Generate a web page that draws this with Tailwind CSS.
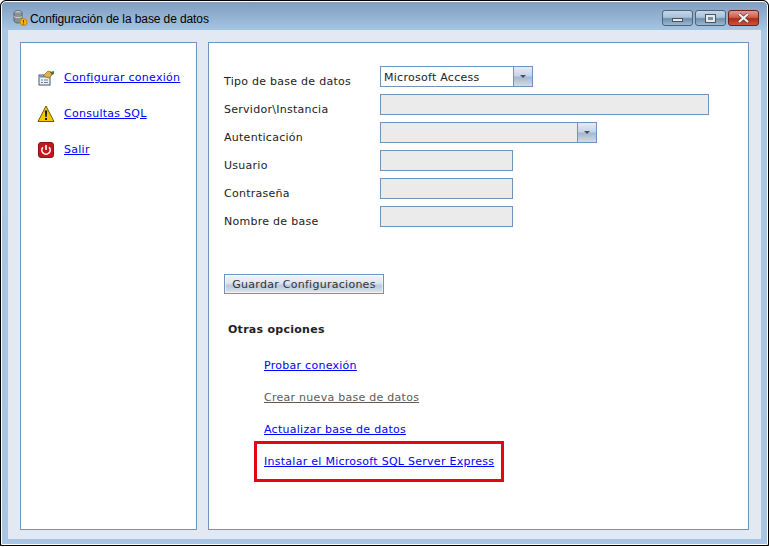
<!DOCTYPE html>
<html lang="es">
<head>
    <meta charset="UTF-8">
    <title>Configuración de la base de datos</title>
    <script src="https://cdn.jsdelivr.net/npm/@tailwindcss/browser@4"></script>
</head>
<body class="bg-white overflow-hidden font-['DejaVu_Sans',sans-serif] text-[11px] tracking-[0.27px] text-[#222]">
    <div class="w-[769px] h-[547px] pb-px">
        <div class="h-[546px] border border-black rounded-t-[6px] bg-black">
            <div class="h-full border border-white rounded-t-[5px] bg-[linear-gradient(180deg,#7f9ec0_0px,#a9c8e6_30px,#a8c5e3_100%)] flex flex-col px-[6px] pb-[5px]">

                <!-- title bar -->
                <div class="h-[28px] shrink-0 flex items-start">
                    <svg class="w-[18px] h-[18px] mt-[7px] ml-[3px]" viewBox="0 0 18 18">
                        <ellipse cx="7" cy="3.500" rx="4" ry="2" fill="#c9ccd0" stroke="#6d7278"/>
                        <path d="M3 3.500v8c0 1.500 1.800 2.500 4 2.500s4-1 4-2.500v-8" fill="#8b9096" stroke="#5e6368"/>
                        <path d="M3 7.500c1 1.500 7 1.500 8 0" fill="none" stroke="#d0d3d6"/>
                        <circle cx="12.500" cy="13" r="3.500" fill="#f2b01e" stroke="#c9860f"/>
                        <path d="M12.500 11v2.500M12.500 14.500v1" stroke="#5a3a00"/>
                    </svg>
                    <span class="ml-px mt-[7px] text-[12px] leading-[20px] text-black font-['Liberation_Sans',sans-serif] tracking-[-0.1px]">Configuración de la base de datos</span>

                    <div class="ml-auto mt-[8px] mr-[2px] flex gap-[2px]">
                        <div class="w-[31px] h-[16px] rounded-[3px] border border-[#4d6378] bg-[linear-gradient(180deg,#c4d6e8_0%,#a9c1d9_45%,#6f8fae_55%,#9db8d2_100%)] flex items-center justify-center">
                            <div class="w-[11px] h-[4px] mt-[3px] bg-[#e8e8e8] border border-[#4a5560]"></div>
                        </div>
                        <div class="w-[31px] h-[16px] rounded-[3px] border border-[#4d6378] bg-[linear-gradient(180deg,#c4d6e8_0%,#a9c1d9_45%,#6f8fae_55%,#9db8d2_100%)] flex items-center justify-center">
                            <div class="w-[11px] h-[9px] bg-[#e8e8e8] border border-[#4a5560] flex items-center justify-center"><div class="w-[5px] h-[3px] bg-[#6f8fae]"></div></div>
                        </div>
                        <div class="w-[31px] h-[16px] rounded-[3px] border border-[#6b2018] bg-[linear-gradient(180deg,#e29a8c_0%,#d0604f_45%,#ae2a1a_55%,#c8553f_100%)] flex items-center justify-center">
                            <svg class="w-[13px] h-[10px]" viewBox="0 0 13 10">
                                <path d="M2 1l9 8M11 1l-9 8" stroke="#5b3a36" stroke-width="3.500"/>
                                <path d="M2 1l9 8M11 1l-9 8" stroke="#f2f2f2" stroke-width="2.200"/>
                            </svg>
                        </div>
                    </div>
                </div>

                <!-- content -->
                <div class="flex-1 bg-[#e3e9f2] flex gap-[11px] pl-[12px] pr-[12px] pt-[12px] pb-[9px]">

                    <!-- left menu -->
                    <div class="w-[177px] border border-[#7093bb] bg-white pt-[25px] pl-[17px]">
                        <div class="flex items-center h-[20px] mb-[16px]">
                            <svg class="w-[17px] h-[16px]" viewBox="0 0 17 16">
                                <rect x="1" y="5" width="11" height="10" fill="#eef2f8" stroke="#44566e"/>
                                <rect x="1.500" y="5.500" width="10" height="2" fill="#6f8fb8"/>
                                <path d="M3 10h2M6 10h4M3 12.500h2M6 12.500h4" stroke="#6b7f99"/>
                                <path d="M5 6l5-5 3 1 1 3-3 3-3-1z" fill="#e0b050" stroke="#8a6414" stroke-width=".7"/>
                                <path d="M12 2l4-1v3l-2 1z" fill="#3f7d3a"/>
                            </svg>
                            <a href="#" class="ml-[9px] text-[#0000ff] underline">Configurar conexión</a>
                        </div>
                        <div class="flex items-center h-[20px] mb-[16px]">
                            <svg class="w-[18px] h-[18px] -ml-px" viewBox="0 0 18 18">
                                <path d="M9 1L17 16.500H1z" fill="#f5c800" stroke="#6d5a10" stroke-linejoin="round"/>
                                <path d="M7.800 5.500h2.400l-.5 6.500h-1.400z" fill="#1b1b1b"/>
                                <rect x="8" y="13" width="2" height="2" fill="#1b1b1b"/>
                            </svg>
                            <a href="#" class="ml-[9px] text-[#0000ff] underline">Consultas SQL</a>
                        </div>
                        <div class="flex items-center h-[20px]">
                            <svg class="w-[16px] h-[16px]" viewBox="0 0 16 16">
                                <rect x=".5" y=".5" width="15" height="15" rx="2.500" fill="#c4161c" stroke="#8f1015"/>
                                <path d="M4.900 5.200a4.200 4.200 0 1 0 6.200 0" fill="none" stroke="#fff" stroke-width="1.600"/>
                                <path d="M8 3v5" stroke="#fff" stroke-width="1.600"/>
                            </svg>
                            <a href="#" class="ml-[10px] text-[#0000ff] underline">Salir</a>
                        </div>
                    </div>

                    <!-- right panel -->
                    <div class="flex-1 border border-[#7093bb] bg-white pt-[23px] pl-[15px]">
                        <div class="flex flex-col gap-[7px]">
                            <div class="flex h-[21px]">
                                <label class="w-[156px] pt-[5px] leading-[22px]">Tipo de base de datos</label>
                                <div class="w-[153px] h-[21px] border border-[#7093bb] flex">
                                    <span class="flex-1 pl-[3px] leading-[21px]">Microsoft Access</span>
                                    <span class="w-[19px] border-l border-[#7093bb] bg-[linear-gradient(180deg,#e4ebf3_0%,#c7d5e5_45%,#a5b9d0_55%,#d0dcea_100%)] flex items-center justify-center"><span class="w-0 h-0 border-x-[3px] border-t-[3px] border-x-transparent border-t-[#44505e]"></span></span>
                                </div>
                            </div>
                            <div class="flex h-[21px]">
                                <label class="w-[156px] pt-[5px] leading-[22px]">Servidor\Instancia</label>
                                <div class="w-[329px] h-[21px] border border-[#7093bb] bg-[#ebebeb]"></div>
                            </div>
                            <div class="flex h-[21px]">
                                <label class="w-[156px] pt-[5px] leading-[22px]">Autenticación</label>
                                <div class="w-[217px] h-[21px] border border-[#7093bb] bg-[#ebebeb] flex">
                                    <span class="flex-1"></span>
                                    <span class="w-[19px] border-l border-[#7093bb] bg-[linear-gradient(180deg,#e4ebf3_0%,#c7d5e5_45%,#a5b9d0_55%,#d0dcea_100%)] flex items-center justify-center"><span class="w-0 h-0 border-x-[3px] border-t-[3px] border-x-transparent border-t-[#44505e]"></span></span>
                                </div>
                            </div>
                            <div class="flex h-[21px]">
                                <label class="w-[156px] pt-[5px] leading-[22px]">Usuario</label>
                                <div class="w-[133px] h-[21px] border border-[#7093bb] bg-[#ebebeb]"></div>
                            </div>
                            <div class="flex h-[21px]">
                                <label class="w-[156px] pt-[5px] leading-[22px]">Contraseña</label>
                                <div class="w-[133px] h-[21px] border border-[#7093bb] bg-[#ebebeb]"></div>
                            </div>
                            <div class="flex h-[21px]">
                                <label class="w-[156px] pt-[5px] leading-[22px]">Nombre de base</label>
                                <div class="w-[133px] h-[21px] border border-[#7093bb] bg-[#ebebeb]"></div>
                            </div>
                        </div>

                        <button class="mt-[47px] block w-[160px] h-[20px] border border-[#7093bb] bg-[linear-gradient(180deg,#f2f5f9_0%,#dde5ee_45%,#bac9da_60%,#dfe7f0_100%)] outline outline-1 -outline-offset-2 outline-white/60 text-[11px] leading-[20px] text-center text-[#333]">Guardar Configuraciones</button>

                        <p class="mt-[28px] ml-[4px] font-bold leading-[16px] text-[#222]">Otras opciones</p>

                        <div class="mt-[20px] ml-[40px] flex flex-col gap-[16px] leading-[16px]">
                            <a href="#" class="text-[#0000ff] underline w-fit">Probar conexión</a>
                            <a href="#" class="text-[#5f5a55] underline w-fit">Crear nueva base de datos</a>
                            <a href="#" class="text-[#0000ff] underline w-fit">Actualizar base de datos</a>
                            <div class="relative w-fit">
                                <a href="#" class="text-[#0000ff] underline">Instalar el Microsoft SQL Server Express</a>
                                <div class="absolute left-[-10px] top-[-13px] w-[250px] h-[41px] border-[3px] border-[#e30613]"></div>
                            </div>
                        </div>
                    </div>
                </div>
            </div>
        </div>
    </div>
</body>
</html>
